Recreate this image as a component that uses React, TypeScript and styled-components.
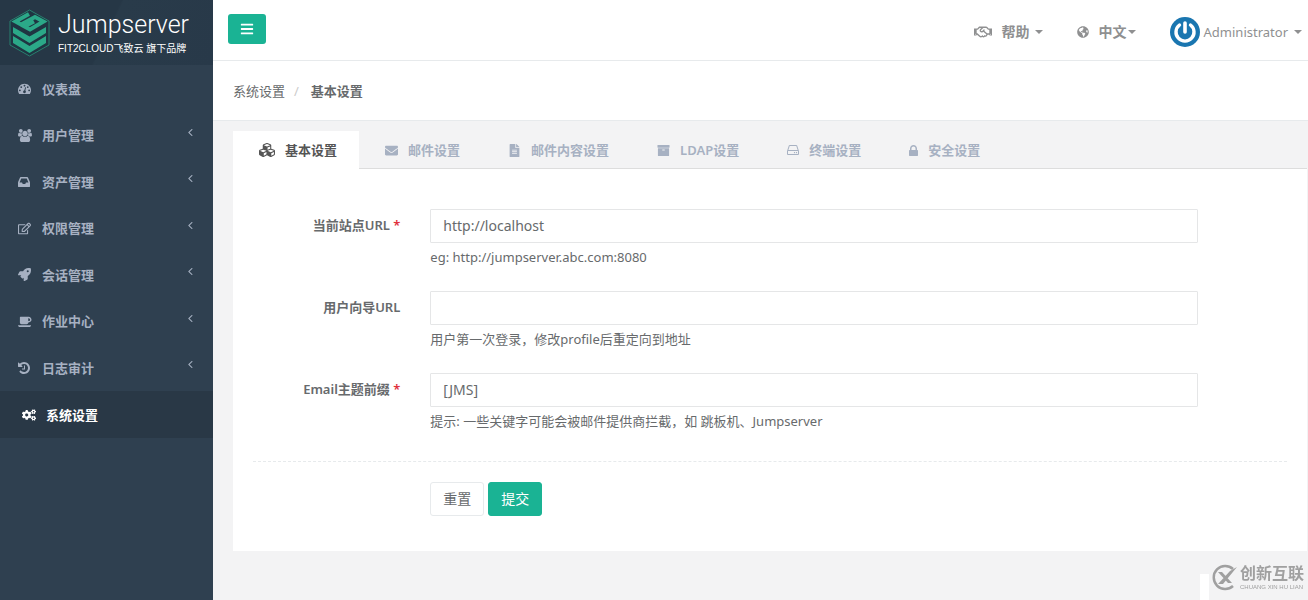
import React from 'react';
import styled, { createGlobalStyle, css } from 'styled-components';
import {
  FaRegEdit, FaRocket, FaCogs, FaCubes, FaEnvelope, FaFileAlt, FaGlobeAmericas,
  FaRegHandshake, FaBars,
} from 'react-icons/fa';

const GlobalStyle = createGlobalStyle`
  *, *::before, *::after { box-sizing: border-box; }
  body {
    margin: 0;
    background: #2f4050;
    color: #676a6c;
    font-family: "Noto Sans", "Noto Sans CJK SC", sans-serif;
    font-size: 13px;
    line-height: 18px;
  }
  a { color: inherit; text-decoration: none; }
  button, input { font: inherit; color: inherit; }
`;

const Page = styled.div`
  display: flex;
  min-height: 100vh;
`;

const Sidebar = styled.aside`
  flex: 0 0 213px;
  background: #2f4050;
`;

const Brand = styled.a`
  display: flex;
  align-items: center;
  gap: 8px;
  height: 65px;
  padding-left: 9px;
  background: linear-gradient(115deg, #263746 0%, #263746 50%, #293b4a 51%, #283949 100%);
  color: #fff;
`;

const BrandText = styled.span`
  display: flex;
  flex-direction: column;
`;

const BrandName = styled.span`
  font: 300 25px/32px Roboto, sans-serif;
`;

const BrandNote = styled.span`
  font: 10px/16px "Liberation Sans", "Noto Sans CJK SC", sans-serif;
  white-space: nowrap;
`;

const Menu = styled.ul`
  margin: 0;
  padding: 0;
  list-style: none;
`;

const MenuItem = styled.li`
  height: 47px;
  &:nth-child(even):not(:last-child) { height: 46px; }
`;

const MenuLink = styled.a<{ $active?: boolean }>`
  display: flex;
  align-items: center;
  height: 100%;
  padding: 0 19px 0 18px;
  color: #a7b1c2;
  font-weight: 600;
  ${(p) => p.$active && css`
    padding-left: 22px;
    background: #293846;
    color: #fff;
  `}
`;

const MenuIcon = styled.span`
  display: flex;
  width: 24px;
  font-size: 13px;
`;

const Arrow = styled.span`
  display: flex;
  margin: 0 0 6px auto;
`;

const Main = styled.div`
  flex: 1;
  min-width: 0;
  background: #f3f3f4;
`;

const TopBar = styled.header`
  display: flex;
  align-items: center;
  justify-content: space-between;
  height: 61px;
  padding: 0 6px 0 15px;
  border-bottom: 1px solid #e7eaec;
  background: #fff;
`;

const ToggleButton = styled.button`
  display: flex;
  align-items: center;
  justify-content: center;
  width: 38px;
  height: 30px;
  margin-bottom: 2px;
  padding: 0;
  border: 0;
  border-radius: 3px;
  background: #1ab394;
  color: #fff;
  font-size: 14px;
`;

const TopLinks = styled.nav`
  display: flex;
  align-items: center;
  gap: 34px;
  padding-top: 3px;
  color: #8f9091;
`;

const TopLink = styled.a<{ $bold?: boolean }>`
  display: flex;
  align-items: center;
  gap: ${(p) => (p.$bold ? 10 : 4)}px;
  font-size: ${(p) => (p.$bold ? 14 : 13)}px;
  font-weight: ${(p) => (p.$bold ? 600 : 400)};
`;

const Caret = styled.span<{ $space: number }>`
  margin-left: ${(p) => p.$space}px;
  border: 4px solid transparent;
  border-top-color: currentColor;
  border-bottom: 0;
`;

const LinkText = styled.span`
  display: flex;
  align-items: center;
`;

const Breadcrumb = styled.nav`
  display: flex;
  align-items: center;
  height: 60px;
  padding: 0 20px;
  border-bottom: 1px solid #e7eaec;
  background: #fff;
`;

const Slash = styled.span`
  padding: 0 12px 0 9px;
  color: #ccc;
`;

const Content = styled.main`
  margin: 10px 1px 0 20px;
  padding-bottom: 49px;
`;

const Tabs = styled.div`
  display: flex;
  height: 38px;
  border-bottom: 1px solid #ddd;
`;

const Tab = styled.button<{ $active?: boolean }>`
  display: flex;
  align-items: center;
  gap: 10px;
  height: 38px;
  padding: 0 22px 0 26px;
  border: 0;
  background: ${(p) => (p.$active ? '#fff' : 'transparent')};
  color: ${(p) => (p.$active ? '#555' : '#a7b1c2')};
  font-weight: 600;
  white-space: nowrap;
`;

const TabIcon = styled.span`
  display: flex;
`;

const Panel = styled.section`
  padding: 40px 20px 35px;
  background: #fff;
`;

const Form = styled.form`
  display: flex;
  flex-direction: column;
`;

const FormRow = styled.div`
  display: grid;
  grid-template-columns: 2fr 9fr 1fr;
  margin: 0 -15px 25px;
`;

const Label = styled.label`
  padding: 7px 15px 0;
  font-weight: 600;
  text-align: right;
`;

const Required = styled.span`
  color: #e0303a;
`;

const Field = styled.div`
  padding: 0 15px;
`;

const TextInput = styled.input`
  display: block;
  width: 100%;
  height: 34px;
  padding: 5px 12px 7px;
  border: 1px solid #e5e6e7;
  border-radius: 1px;
  background: #fff;
  font-size: 14px;
`;

const Help = styled.p`
  margin: 5px 0 0;
`;

const Divider = styled.hr`
  width: 100%;
  height: 0;
  margin: 6px 0 20px;
  border: 0;
  border-top: 1px dashed #e7eaec;
`;

const Actions = styled(FormRow)`
  margin-bottom: 0;
`;

const Buttons = styled.div`
  display: flex;
  grid-column: 2;
  gap: 4px;
  padding: 0 15px;
`;

const Button = styled.button<{ $primary?: boolean }>`
  height: 34px;
  padding: 0 12px;
  border: 1px solid ${(p) => (p.$primary ? '#1ab394' : '#e7eaec')};
  border-radius: 3px;
  background: ${(p) => (p.$primary ? '#1ab394' : '#fff')};
  color: ${(p) => (p.$primary ? '#fff' : 'inherit')};
  font-size: 14px;
`;

const Stamp = styled.div`
  position: fixed;
  right: 0;
  bottom: 0;
  display: flex;
  align-items: center;
  gap: 2px;
  height: 26px;
  padding: 0 4px 0 2px;
  border-left: 9px solid #fff;
  background: #f3f3f4;
  color: #a0a0a0;
`;

const StampMark = styled.svg`
  margin-top: -20px;
`;

const StampText = styled.span`
  display: flex;
  flex-direction: column;
  margin-top: -18px;
  font: 700 16px/18px "Liberation Sans", "Noto Sans CJK SC", sans-serif;
  white-space: nowrap;
`;

const StampSmall = styled.small`
  font: 6px/8px "Liberation Sans", sans-serif;
`;

type Glyph = React.ComponentType;

const glyph = (width: number, height: number, viewBox: string, d: string): Glyph => () => (
  <svg width={width} height={height} viewBox={viewBox} fill="currentColor" aria-hidden="true">
    <path d={d} />
  </svg>
);

const DashboardIcon = glyph(13, 13, '0 0 1792 1792', 'M384 1152q0-53-37.500-90.500t-90.500-37.500-90.500 37.500-37.500 90.500 37.500 90.500 90.500 37.500 90.500-37.500 37.500-90.500zm192-448q0-53-37.500-90.500t-90.500-37.500-90.500 37.500-37.500 90.500 37.500 90.500 90.500 37.500 90.500-37.500 37.500-90.500zm428 481l101-382q6-26-7.500-48.500t-38.500-29.500-48 6.500-30 39.500l-101 382q-60 5-107 43.500t-63 98.500q-20 77 20 146t117 89 146-20 89-117q16-60-6-117t-72-91zm660-33q0-53-37.500-90.500t-90.500-37.500-90.500 37.500-37.500 90.500 37.500 90.500 90.500 37.500 90.500-37.500 37.500-90.500zm-640-640q0-53-37.500-90.500t-90.500-37.500-90.500 37.500-37.500 90.500 37.500 90.500 90.500 37.500 90.500-37.500 37.500-90.500zm448 192q0-53-37.500-90.500t-90.500-37.500-90.500 37.500-37.500 90.500 37.500 90.500 90.500 37.500 90.500-37.500 37.500-90.500zm320 448q0 261-141 483-19 29-54 29h-1402q-35 0-54-29-141-221-141-483 0-182 71-348t191-286 286-191 348-71 348 71 286 191 191 286 71 348z');
const UsersIcon = glyph(14, 13, '0 0 1920 1792', 'M593 896q-162 5-265 128h-134q-82 0-138-40.500t-56-118.500q0-353 124-353 6 0 43.500 21t97.500 42.500 119 21.500q67 0 133-23-5 37-5 66 0 139 81 256zm1071 637q0 120-73 189.500t-194 69.500h-874q-121 0-194-69.500t-73-189.500q0-53 3.500-103.500t14-109 26.500-108.500 43-97.500 62-81 85.500-53.500 111.500-20q10 0 43 21.500t73 48 107 48 135 21.500 135-21.500 107-48 73-48 43-21.500q61 0 111.500 20t85.500 53.500 62 81 43 97.500 26.500 108.500 14 109 3.500 103.500zm-1024-1277q0 106-75 181t-181 75-181-75-75-181 75-181 181-75 181 75 75 181zm704 384q0 159-112.500 271.500t-271.500 112.500-271.500-112.500-112.500-271.500 112.500-271.500 271.500-112.500 271.500 112.500 112.500 271.500zm576 225q0 78-56 118.500t-138 40.500h-134q-103-123-265-128 81-117 81-256 0-29-5-66 66 23 133 23 59 0 119-21.500t97.500-42.500 43.500-21q124 0 124 353zm-128-609q0 106-75 181t-181 75-181-75-75-181 75-181 181-75 181 75 75 181z');
const InboxIcon = glyph(12, 12, '128 128 1536 1536', 'M1151 960h316q-1-3-2.500-8t-2.500-8l-212-496h-708l-212 496q-1 2-2.500 8t-2.500 8h316l95 192h320zm513 30v482q0 26-19 45t-45 19h-1408q-26 0-45-19t-19-45v-482q0-62 25-123l238-552q10-25 36.500-42t52.500-17h832q26 0 52.500 17t36.500 42l238 552q25 61 25 123z');
const CoffeeIcon = glyph(14, 13, '0 0 1920 1792', 'M1664 640q0-80-56-136t-136-56h-64v384h64q80 0 136-56t56-136zm-1664 768h1792q0 106-75 181t-181 75h-1280q-106 0-181-75t-75-181zm1856-768q0 159-112.500 271.500t-271.500 112.500h-64v32q0 92-66 158t-158 66h-704q-92 0-158-66t-66-158v-736q0-26 19-45t45-19h1152q159 0 271.500 112.500t112.500 271.500z');
const HistoryIcon = glyph(12, 12, '128 128 1536 1536', 'M1664 896q0 156-61 298t-164 245-245 164-298 61q-172 0-327-72.500t-264-204.500q-7-10-6.500-22.500t8.500-20.500l137-138q10-9 25-9 16 2 23 12 73 95 179 147t225 52q104 0 198.500-40.500t163.500-109.500 109.500-163.500 40.500-198.500-40.500-198.500-109.500-163.500-163.500-109.500-198.500-40.500q-98 0-188 35.500t-160 101.500l137 138q31 30 14 69-17 40-59 40h-448q-26 0-45-19t-19-45v-448q0-42 40-59 39-17 69 14l130 129q107-101 244.500-156.500t284.500-55.500q156 0 298 61t245 164 164 245 61 298zm-640-288v448q0 14-9 23t-23 9h-320q-14 0-23-9t-9-23v-64q0-14 9-23t23-9h224v-352q0-14 9-23t23-9h64q14 0 23 9t9 23z');
const ArchiveIcon = glyph(13, 13, '64 0 1664 1792', 'M1088 832q0-26-19-45t-45-19h-256q-26 0-45 19t-19 45 19 45 45 19h256q26 0 45-19t19-45zm576-192v960q0 26-19 45t-45 19h-1408q-26 0-45-19t-19-45v-960q0-26 19-45t45-19h1408q26 0 45 19t19 45zm64-448v256q0 26-19 45t-45 19h-1536q-26 0-45-19t-19-45v-256q0-26 19-45t45-19h1536q26 0 45 19t19 45z');
const DriveIcon = glyph(12, 12, '128 128 1536 1536', 'M1168 1216q0 33-23.500 56.500t-56.500 23.500-56.500-23.500-23.500-56.500 23.500-56.500 56.500-23.500 56.500 23.500 23.500 56.500zm256 0q0 33-23.500 56.500t-56.500 23.500-56.500-23.500-23.500-56.500 23.500-56.500 56.500-23.500 56.500 23.500 23.500 56.500zm112 160v-320q0-13-9.500-22.500t-22.500-9.500h-1216q-13 0-22.500 9.500t-9.500 22.500v320q0 13 9.500 22.500t22.500 9.500h1216q13 0 22.500-9.500t9.500-22.500zm-1230-480h1180l-157-482q-4-13-16-21.500t-26-8.500h-782q-14 0-26 8.500t-16 21.500zm1358 160v320q0 66-47 113t-113 47h-1216q-66 0-113-47t-47-113v-320q0-25 16-75l197-606q17-53 63-86t101-33h782q55 0 101 33t63 86l197 606q16 50 16 75z');
const LockIcon = glyph(9, 13, '320 0 1152 1664', 'M640 768h512v-192q0-106-75-181t-181-75-181 75-75 181v192zm832 96v576q0 40-28 68t-68 28h-960q-40 0-68-28t-28-68v-576q0-40 28-68t68-28h32v-192q0-184 132-316t316-132 316 132 132 316v192h32q40 0 68 28t28 68z');
const AngleLeftIcon = glyph(7, 13, '480 64 896 1792', 'M1203 544q0 13-10 23l-393 393 393 393q10 10 10 23t-10 23l-50 50q-10 10-23 10t-23-10l-466-466q-10-10-10-23t10-23l466-466q10-10 23-10t23 10l50 50q10 10 10 23z');

const menu: { icon: Glyph; text: string; arrow?: boolean; active?: boolean }[] = [
  { icon: DashboardIcon, text: '仪表盘' },
  { icon: UsersIcon, text: '用户管理', arrow: true },
  { icon: InboxIcon, text: '资产管理', arrow: true },
  { icon: FaRegEdit, text: '权限管理', arrow: true },
  { icon: FaRocket, text: '会话管理', arrow: true },
  { icon: CoffeeIcon, text: '作业中心', arrow: true },
  { icon: HistoryIcon, text: '日志审计', arrow: true },
  { icon: () => <FaCogs size={14} />, text: '系统设置', active: true },
];

const tabs: { icon: Glyph; text: string }[] = [
  { icon: () => <FaCubes size={16} />, text: '基本设置' },
  { icon: FaEnvelope, text: '邮件设置' },
  { icon: () => <FaFileAlt width={11} size={13} />, text: '邮件内容设置' },
  { icon: ArchiveIcon, text: 'LDAP设置' },
  { icon: DriveIcon, text: '终端设置' },
  { icon: LockIcon, text: '安全设置' },
];

const fields = [
  { id: 'site', label: '当前站点URL', required: true, value: 'http://localhost', help: 'eg: http://jumpserver.abc.com:8080' },
  { id: 'guide', label: '用户向导URL', required: false, value: '', help: '用户第一次登录，修改profile后重定向到地址' },
  { id: 'prefix', label: 'Email主题前缀', required: true, value: '[JMS]', help: '提示: 一些关键字可能会被邮件提供商拦截，如 跳板机、Jumpserver' },
];

const Logo = () => (
  <svg width="41" height="48" viewBox="0 0 41 48" aria-hidden="true">
    <path d="M20.500 1 40 12v24L20.500 47 1 36V12Z" fill="#1f3542" stroke="#27806f" strokeWidth="1" />
    <path d="M20 5 6.500 12.500 12 15.500 26 8 34.500 12.500 21 20.500 15.500 17.500 25 12.500" fill="none" stroke="#2ba888" strokeWidth="4" />
    <path d="M4 18 20.500 27.500 37 18v6L20.500 34 4 24Z" fill="#2ba888" />
    <path d="M4 27 20.500 37 37 27v7L20.500 44 4 34Z" fill="#2ba888" />
  </svg>
);

const Avatar = () => (
  <svg width="30" height="30" viewBox="0 0 30 30" aria-hidden="true">
    <circle cx="15" cy="15" r="15" fill="#1a76b0" />
    <path d="M9.500 8A9 9 0 1 0 20.500 8" fill="none" stroke="#fff" strokeWidth="3.400" strokeLinecap="round" />
    <path d="M15 6v9" stroke="#fff" strokeWidth="3.600" strokeLinecap="round" />
  </svg>
);

export default function App() {
  return (
    <>
      <GlobalStyle />
      <Page>
        <Sidebar>
          <Brand href="#">
            <Logo />
            <BrandText>
              <BrandName>Jumpserver</BrandName>
              <BrandNote>FIT2CLOUD飞致云 旗下品牌</BrandNote>
            </BrandText>
          </Brand>
          <Menu>
            {menu.map(({ icon: Icon, text, arrow, active }) => (
              <MenuItem key={text}>
                <MenuLink href="#" $active={active}>
                  <MenuIcon><Icon /></MenuIcon>
                  {text}
                  {arrow && <Arrow><AngleLeftIcon /></Arrow>}
                </MenuLink>
              </MenuItem>
            ))}
          </Menu>
        </Sidebar>
        <Main>
          <TopBar>
            <ToggleButton type="button" aria-label="Menu"><FaBars /></ToggleButton>
            <TopLinks>
              <TopLink href="#" $bold>
                <FaRegHandshake size={18} />
                <LinkText>帮助<Caret $space={5} /></LinkText>
              </TopLink>
              <TopLink href="#" $bold>
                <FaGlobeAmericas size={12} />
                <LinkText>中文<Caret $space={1} /></LinkText>
              </TopLink>
              <TopLink href="#">
                <Avatar />
                <LinkText>Administrator<Caret $space={6} /></LinkText>
              </TopLink>
            </TopLinks>
          </TopBar>
          <Breadcrumb>
            <a href="#">系统设置</a>
            <Slash>/</Slash>
            <strong>基本设置</strong>
          </Breadcrumb>
          <Content>
            <Tabs role="tablist">
              {tabs.map(({ icon: Icon, text }, i) => (
                <Tab key={text} type="button" role="tab" aria-selected={i === 0} $active={i === 0}>
                  <TabIcon><Icon /></TabIcon>
                  {text}
                </Tab>
              ))}
            </Tabs>
            <Panel>
              <Form>
                {fields.map((f) => (
                  <FormRow key={f.id}>
                    <Label htmlFor={f.id}>
                      {f.label}
                      {f.required && <Required> *</Required>}
                    </Label>
                    <Field>
                      <TextInput id={f.id} type="text" defaultValue={f.value} />
                      <Help>{f.help}</Help>
                    </Field>
                  </FormRow>
                ))}
                <Divider />
                <Actions>
                  <Buttons>
                    <Button type="reset">重置</Button>
                    <Button type="button" $primary>提交</Button>
                  </Buttons>
                </Actions>
              </Form>
            </Panel>
          </Content>
        </Main>
      </Page>
      <Stamp>
        <StampMark width="27" height="27" viewBox="0 0 27 27" aria-hidden="true">
          <path d="M22 5A11.500 11.500 0 1 0 22 22" fill="none" stroke="#a0a0a0" strokeWidth="2.500" />
          <path d="M7 8h4l10 11h-4ZM26 3 12 20H7L19 7Z" fill="#a0a0a0" />
        </StampMark>
        <StampText>
          创新互联
          <StampSmall>CHUANG XIN HU LIAN</StampSmall>
        </StampText>
      </Stamp>
    </>
  );
}
